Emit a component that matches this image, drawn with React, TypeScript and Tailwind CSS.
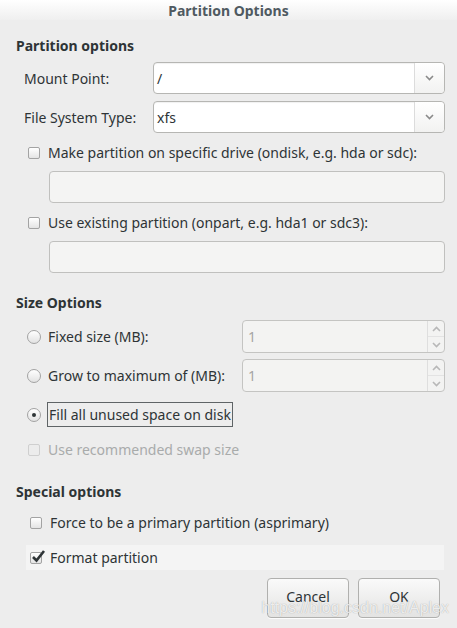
import React from "react";

const font = { fontFamily: '"Noto Sans", "Open Sans", sans-serif' };

function Chevron({ up = false, className = "" }: { up?: boolean; className?: string }) {
  return (
    <svg width="9" height="6" viewBox="0 0 9 6" className={className}>
      <path
        d={up ? "M1 5 L4.5 1.5 L8 5" : "M1 1 L4.5 4.5 L8 1"}
        fill="none"
        stroke="currentColor"
        strokeWidth="1.6"
      />
    </svg>
  );
}

function Combo({ value }: { value: string }) {
  return (
    <div className="flex h-[32px] w-[292px] shrink-0 rounded-[4px] border border-[#b6b6b3] bg-white shadow-[inset_0_1px_1px_rgba(0,0,0,0.06)]">
      <div className="flex flex-1 items-center px-[3px] text-[14px] text-[#2e3436]">{value}</div>
      <div className="flex w-[30px] items-center justify-center rounded-r-[4px] border-l border-[#dcdcdc] bg-gradient-to-b from-white to-[#f2f2f1] text-[#8a8a8a]">
        <Chevron />
      </div>
    </div>
  );
}

function Check({ checked = false, disabled = false }: { checked?: boolean; disabled?: boolean }) {
  return (
    <div
      className={
        "relative h-[12px] w-[12px] shrink-0 rounded-[2px] border " +
        (disabled ? "border-[#cfcfcf] bg-[#ececec]" : "border-[#a3a3a3] bg-gradient-to-b from-white to-[#e4e4e4]")
      }
    >
      {checked && (
        <svg width="15" height="14" viewBox="0 0 15 14" className="absolute -top-[4px] left-[0px]">
          <path d="M2 8 L5.5 11.5 L13 2" fill="none" stroke="#2e3436" strokeWidth="2.6" />
        </svg>
      )}
    </div>
  );
}

function Radio({ checked = false }: { checked?: boolean }) {
  return (
    <div className="flex h-[14px] w-[14px] shrink-0 items-center justify-center rounded-full border border-[#a3a3a3] bg-gradient-to-b from-white to-[#e2e2e2]">
      {checked && <div className="h-[4px] w-[4px] rounded-full bg-[#2e3436]" />}
    </div>
  );
}

function Spin() {
  return (
    <div className="flex h-[33px] w-[203px] shrink-0 rounded-[4px] border border-[#c4c4c2] bg-[#f3f3f2]">
      <div className="flex flex-1 items-center px-[5px] text-[14px] text-[#a5a5a5]">1</div>
      <div className="flex w-[17px] flex-col border-l border-[#dedede] text-[#b8b8b8]">
        <div className="flex flex-1 items-center justify-center border-b border-[#e3e3e3]">
          <Chevron up />
        </div>
        <div className="flex flex-1 items-center justify-center">
          <Chevron />
        </div>
      </div>
    </div>
  );
}

function Entry() {
  return <div className="h-[32px] w-[396px] rounded-[4px] border border-[#c0c0be] bg-[#f4f4f3]" />;
}

function Button({ label }: { label: string }) {
  return (
    <div className="flex h-[40px] w-[82px] items-start justify-center rounded-[4px] border border-[#b0b0ae] bg-gradient-to-b from-[#fafafa] to-[#e3e3e2] pt-[7px] text-[14px] text-[#2e3436] shadow-[0_1px_0_rgba(255,255,255,0.8)]">
      {label}
    </div>
  );
}

export default function App() {
  return (
    <div className="relative h-[628px] w-[457px] overflow-hidden bg-[#ededed] text-[#2e3436]" style={font}>
      {/* Title bar */}
      <div className="flex h-[20px] items-center justify-center bg-gradient-to-b from-white to-[#efefef] text-[14px] font-bold text-[#4f5a61]">
        Partition Options
      </div>

      <div className="flex flex-col pl-[16px] pr-[12px] pt-[16px]">
        {/* Partition options */}
        <div className="text-[14px] font-bold leading-[20px]">Partition options</div>

        <div className="mt-[6px] flex items-center">
          <div className="w-[137px] shrink-0 pl-[8px] text-[14px]">Mount Point:</div>
          <Combo value="/" />
        </div>
        <div className="mt-[7px] flex items-center">
          <div className="w-[137px] shrink-0 pl-[8px] text-[14px]">File System Type:</div>
          <Combo value="xfs" />
        </div>

        <div className="mt-[8px] flex items-center gap-[8px] pl-[12px] text-[14px] leading-[24px]">
          <Check />
          <span>Make partition on specific drive (ondisk, e.g. hda or sdc):</span>
        </div>
        <div className="mt-[6px] pl-[33px]">
          <Entry />
        </div>

        <div className="mt-[8px] flex items-center gap-[8px] pl-[12px] text-[14px] leading-[24px]">
          <Check />
          <span>Use existing partition (onpart, e.g. hda1 or sdc3):</span>
        </div>
        <div className="mt-[6px] pl-[33px]">
          <Entry />
        </div>

        {/* Size Options */}
        <div className="mt-[20px] text-[14px] font-bold leading-[20px]">Size Options</div>

        <div className="mt-[7px] flex items-center">
          <div className="flex w-[226px] shrink-0 items-center gap-[7px] pl-[11px] text-[14px]">
            <Radio />
            <span>Fixed size (MB):</span>
          </div>
          <Spin />
        </div>
        <div className="mt-[6px] flex items-center">
          <div className="flex w-[226px] shrink-0 items-center gap-[7px] pl-[11px] text-[14px]">
            <Radio />
            <span>Grow to maximum of (MB):</span>
          </div>
          <Spin />
        </div>

        <div className="mt-[10px] flex items-center gap-[6px] pl-[11px] text-[14px]">
          <Radio checked />
          <span className="border border-[#5f6466] px-[1px] leading-[23px]">Fill all unused space on disk</span>
        </div>

        <div className="mt-[12px] flex items-center gap-[8px] pl-[12px] text-[14px] leading-[22px] text-[#a9abab]">
          <Check disabled />
          <span>Use recommended swap size</span>
        </div>

        {/* Special options */}
        <div className="mt-[21px] text-[14px] font-bold leading-[20px]">Special options</div>

        <div className="mt-[10px] flex items-center gap-[8px] pl-[14px] text-[14px] leading-[22px]">
          <Check />
          <span>Force to be a primary partition (asprimary)</span>
        </div>

        <div className="ml-[10px] mr-[1px] mt-[11px] flex h-[25px] items-center gap-[8px] bg-[#f4f4f4] pl-[4px] text-[14px]">
          <Check checked />
          <span>Format partition</span>
        </div>

        <div className="mt-[8px] flex justify-end gap-[9px] pr-[5px]">
          <Button label="Cancel" />
          <Button label="OK" />
        </div>
      </div>

      {/* watermark */}
      <div
        className="pointer-events-none absolute bottom-[8px] right-[8px] text-[16px] text-white/80 [text-shadow:0_0_1px_rgba(0,0,0,0.35)]"
        style={{ fontFamily: '"Liberation Sans", sans-serif' }}
      >
        https://blog.csdn.net/Aplex
      </div>
    </div>
  );
}
